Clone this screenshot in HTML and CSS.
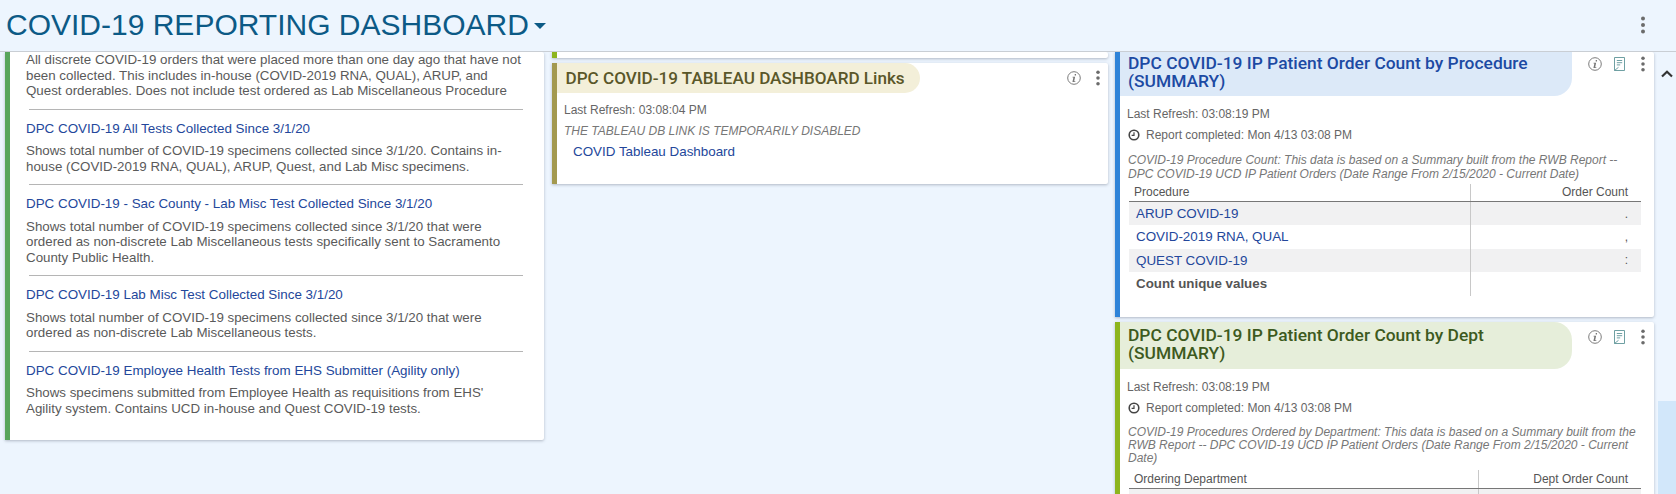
FILE: index.html
```html
<!DOCTYPE html>
<html lang="en">
<head>
<meta charset="utf-8">
<title>COVID-19 Reporting Dashboard</title>
<link rel="stylesheet" href="styles.css">
</head>
<body>
<svg class="sprite" width="0" height="0" aria-hidden="true">
  <symbol id="i-info" viewBox="0 0 16 16">
    <circle cx="8" cy="8" r="7.2" fill="none" stroke="#777" stroke-width="1.1"/>
    <path d="M8.8 3.4h1.5v1.6H8.8zM6.4 6.6h2.9l-1.1 5.1h1.3v.9H6.2l1.1-5.1h-1z" fill="#777"/>
  </symbol>
  <symbol id="i-report" viewBox="0 0 11 14">
    <path d="M.5.5h10v13H.5zM2.8 3.5h5.4M2.8 5.7h5.4M2.8 7.9h3.4M.5 13.5l4-3.2" fill="none" stroke="#5f9598" stroke-width=".9"/>
  </symbol>
  <symbol id="i-more" viewBox="0 0 6 18">
    <circle cx="3" cy="2.5" r="2" fill="#6b6b6b"/>
    <circle cx="3" cy="9" r="2" fill="#6b6b6b"/>
    <circle cx="3" cy="15.5" r="2" fill="#6b6b6b"/>
  </symbol>
  <symbol id="i-clock" viewBox="0 0 12 12">
    <circle cx="6" cy="6" r="4.8" fill="none" stroke="#444" stroke-width="1.6"/>
    <path d="M6 3.2V6.4H3.6" fill="none" stroke="#444" stroke-width="1.2"/>
  </symbol>
</svg>

<header class="topbar">
  <h1 class="page-title">COVID-19 REPORTING DASHBOARD</h1>
  <span class="caret"></span>
  <svg class="top-more"><use href="#i-more"/></svg>
</header>

<main class="board">
  <section class="col col-left">
    <article class="card card-green">
      <div class="item item-first">
        <p class="desc">All discrete COVID-19 orders that were placed more than one day ago that have not been collected. This includes in-house (COVID-2019 RNA, QUAL), ARUP, and Quest orderables. Does not include test ordered as Lab Miscellaneous Procedure</p>
      </div>
      <div class="item">
        <a class="link">DPC COVID-19 All Tests Collected Since 3/1/20</a>
        <p class="desc">Shows total number of COVID-19 specimens collected since 3/1/20. Contains in-house (COVID-2019 RNA, QUAL), ARUP, Quest, and Lab Misc specimens.</p>
      </div>
      <div class="item">
        <a class="link">DPC COVID-19 - Sac County - Lab Misc Test Collected Since 3/1/20</a>
        <p class="desc">Shows total number of COVID-19 specimens collected since 3/1/20 that were ordered as non-discrete Lab Miscellaneous tests specifically sent to Sacramento County Public Health.</p>
      </div>
      <div class="item">
        <a class="link">DPC COVID-19 Lab Misc Test Collected Since 3/1/20</a>
        <p class="desc">Shows total number of COVID-19 specimens collected since 3/1/20 that were ordered as non-discrete Lab Miscellaneous tests.</p>
      </div>
      <div class="item item-last">
        <a class="link">DPC COVID-19 Employee Health Tests from EHS Submitter (Agility only)</a>
        <p class="desc">Shows specimens submitted from Employee Health as requisitions from EHS'<br>Agility system. Contains UCD in-house and Quest COVID-19 tests.</p>
      </div>
    </article>
  </section>

  <section class="col col-mid">
    <article class="card card-lime stub"></article>
    <article class="card card-tan tableau">
      <div class="card-head">
        <h2 class="pill pill-tan pill-single">DPC COVID-19 TABLEAU DASHBOARD Links</h2>
        <div class="actions">
          <svg class="ic-info"><use href="#i-info"/></svg>
          <svg class="ic-more"><use href="#i-more"/></svg>
        </div>
      </div>
      <div class="body">
        <p class="meta">Last Refresh: 03:08:04 PM</p>
        <p class="note note-caps">THE TABLEAU DB LINK IS TEMPORARILY DISABLED</p>
        <a class="link link-tableau">COVID Tableau Dashboard</a>
      </div>
    </article>
  </section>

  <section class="col col-right">
    <article class="card card-blue report report-first">
      <div class="card-head">
        <h2 class="pill pill-blue">DPC COVID-19 IP Patient Order Count by Procedure (SUMMARY)</h2>
        <div class="actions">
          <svg class="ic-info"><use href="#i-info"/></svg>
          <svg class="ic-report"><use href="#i-report"/></svg>
          <svg class="ic-more"><use href="#i-more"/></svg>
        </div>
      </div>
      <div class="body">
        <p class="meta">Last Refresh: 03:08:19 PM</p>
        <p class="meta meta-clock"><svg class="ic-clock"><use href="#i-clock"/></svg>Report completed: Mon 4/13 03:08 PM</p>
        <p class="note">COVID-19 Procedure Count: This data is based on a Summary built from the RWB Report -- DPC COVID-19 UCD IP Patient Orders (Date Range From 2/15/2020 - Current Date)</p>
        <table class="grid grid-proc">
          <thead><tr><th>Procedure</th><th class="num">Order Count</th></tr></thead>
          <tbody>
            <tr><td><a class="link">ARUP COVID-19</a></td><td class="num">.</td></tr>
            <tr><td><a class="link">COVID-2019 RNA, QUAL</a></td><td class="num">,</td></tr>
            <tr><td><a class="link">QUEST COVID-19</a></td><td class="num">:</td></tr>
            <tr class="total"><td>Count unique values</td><td class="num"></td></tr>
          </tbody>
        </table>
      </div>
    </article>
    <article class="card card-lime report report-second">
      <div class="card-head">
        <h2 class="pill pill-lime">DPC COVID-19 IP Patient Order Count by Dept (SUMMARY)</h2>
        <div class="actions">
          <svg class="ic-info"><use href="#i-info"/></svg>
          <svg class="ic-report"><use href="#i-report"/></svg>
          <svg class="ic-more"><use href="#i-more"/></svg>
        </div>
      </div>
      <div class="body">
        <p class="meta">Last Refresh: 03:08:19 PM</p>
        <p class="meta meta-clock"><svg class="ic-clock"><use href="#i-clock"/></svg>Report completed: Mon 4/13 03:08 PM</p>
        <p class="note">COVID-19 Procedures Ordered by Department: This data is based on a Summary built from the RWB Report -- DPC COVID-19 UCD IP Patient Orders (Date Range From 2/15/2020 - Current Date)</p>
        <table class="grid grid-dept">
          <thead><tr><th>Ordering Department</th><th class="num">Dept Order Count</th></tr></thead>
          <tbody>
            <tr><td>&nbsp;</td><td class="num"></td></tr>
          </tbody>
        </table>
      </div>
    </article>
  </section>

  <aside class="scroller">
    <svg class="chevron" viewBox="0 0 12 8"><path d="M1 6.5 6 1.8l5 4.7" fill="none" stroke="#333" stroke-width="2.2"/></svg>
    <div class="thumb"></div>
  </aside>
</main>
</body>
</html>
```
FILE: styles.css
```css
* { box-sizing: border-box; }
html, body { margin: 0; padding: 0; }
body {
  width: 1676px;
  height: 494px;
  overflow: hidden;
  background: #edf5fe;
  font-family: "Liberation Sans", Arial, sans-serif;
  color: #555;
}
p, h1, h2 { margin: 0; }
.sprite { position: absolute; }

.topbar {
  height: 52px;
  display: flex;
  align-items: center;
  padding: 0 0 2px 6px;
  border-bottom: 1px solid #c9ced4;
}
.page-title {
  font-size: 30px;
  font-weight: 400;
  line-height: 34px;
  color: #0c5a86;
}
.caret {
  margin: 2px 0 0 5px;
  border-left: 6px solid transparent;
  border-right: 6px solid transparent;
  border-top: 6px solid #0c5a86;
}
.top-more {
  width: 6px;
  height: 20px;
  margin-left: auto;
  margin-right: 30px;
}

.board {
  height: 442px;
  display: flex;
  align-items: flex-start;
  overflow: hidden;
}
.col { display: flex; flex-direction: column; flex: none; }
.col-left { width: 539px; margin-left: 5px; }
.col-mid { width: 556px; margin-left: 8px; }
.col-right { width: 539px; margin-left: 7px; gap: 5px; }

.card {
  background: #fff;
  border-left: 5px solid #999;
  border-radius: 0 2px 2px 0;
  box-shadow: 0 1px 3px rgba(60, 70, 90, .35);
}
.card-green { border-left-color: #58a55c; }
.card-lime { border-left-color: #8db51e; }
.card-tan { border-left-color: #a3994f; }
.card-blue { border-left-color: #2f83d8; }

/* left list */
.col-left .card { height: 388px; padding: 0 21px 0 19px; }
.item { padding: 10px 0; border-bottom: 1px solid #b5b5b5; }
.item-first { padding: 0 0 10px; }
.item-last { border-bottom: 0; }
.item .link { display: block; line-height: 18px; margin: 0 0 5.5px -3px; }
.desc { margin-left: -3px; font-size: 13.33px; line-height: 15.5px; color: #5a5a5a; }
.link { font-size: 13.4px; color: #23479b; text-decoration: none; white-space: nowrap; }

/* middle */
.stub { height: 6px; }
.tableau { height: 121px; margin-top: 5px; }

.card-head { display: flex; align-items: flex-start; }
.pill {
  font-family: Roboto, "Noto Sans", sans-serif;
  font-weight: 500;
  font-size: 17.4px;
  line-height: 18px;
  width: 452px;
  padding: 2px 15px 0 8px;
}
.pill-single {
  width: auto;
  height: 30px;
  font-size: 17.1px;
  line-height: 30px;
  padding: 0 15px 0 8.5px;
  border-radius: 0 16px 16px 0;
}
.pill-tan { background: #f3efd9; color: #5a5729; }
.pill-blue { background: #dce9f8; color: #1c4aa3; height: 44px; border-radius: 0 0 18px 0; }
.pill-lime { background: #e6eeda; color: #3d5a1e; height: 47px; padding-top: 4px; border-radius: 0 18px 18px 0; }

.actions { margin-left: auto; display: flex; align-items: center; margin-right: 8px; }
.ic-info { width: 14px; height: 14px; }
.ic-report { width: 11px; height: 14px; margin-left: 12px; }
.ic-more { width: 6px; height: 16px; margin-left: 15px; }
.tableau .actions { padding-top: 7px; margin-right: 7px; }
.tableau .ic-more { margin-left: 14px; }
.report-first .actions { padding-top: 4px; }
.report-second .actions { padding-top: 7px; }

.body { padding: 0 12px 0 7px; }
.meta { font-size: 12px; line-height: 14px; color: #666; }
.tableau .body { padding: 10px 7px 0; }
.note { font-size: 12px; line-height: 14px; font-style: italic; color: #777; }
.note-caps { margin-top: 6.5px; }
.link-tableau { display: block; margin: 6px 0 0 9px; line-height: 16px; }

.report .body { padding-top: 10.5px; }
.meta-clock { display: flex; align-items: center; margin-top: 7px; }
.ic-clock { width: 12px; height: 12px; margin: 0 6px 0 1px; flex: none; }
.report .note { margin: 11px 0 0 1px; }
.report-second .note { line-height: 13.4px; }

.grid {
  width: 512px;
  margin: 3px 0 0 2px;
  border-collapse: collapse;
  font-size: 12px;
  table-layout: fixed;
}
.grid-dept { margin-top: 4.5px; }
.grid th {
  font-weight: 400;
  color: #555;
  text-align: left;
  height: 18px;
  padding: 0 0 0 5px;
  border-bottom: 1px solid #777;
}
.grid th.num, .grid td.num { text-align: right; padding: 0 13px 0 0; color: #555; }
.grid td { height: 23.5px; padding: 0 0 0 7px; }
.grid tbody tr:nth-child(odd) { background: #f1f1f2; }
.grid tbody tr.total { background: none; font-weight: 700; color: #555; font-size: 13.33px; }
.grid th:first-child, .grid td:first-child { border-right: 1px solid #c8c8c8; }
.grid-proc th:first-child { width: 341px; }
.grid-dept th:first-child { width: 349px; }
.report { flex: none; }
.report-first { height: 265px; }
.report-second { height: 180px; }

/* scroll rail */
.scroller {
  flex: 1;
  height: 442px;
  margin-left: 4px;
  position: relative;
}
.chevron { position: absolute; left: 3px; top: 18px; width: 12px; height: 8px; }
.thumb { position: absolute; left: 0; right: 0; bottom: 0; height: 93px; background: #d2e7fa; }
```
